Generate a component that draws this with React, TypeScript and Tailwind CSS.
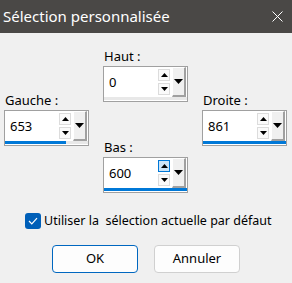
import React from "react"

const font = { fontFamily: '"Noto Sans", "Open Sans", sans-serif' }

function Tri({ down = false, size = "sm" }: { down?: boolean; size?: "sm" | "lg" }) {
  // tiny triangles used on the spinner and dropdown buttons
  if (size === "lg") {
    return (
      <svg width="9" height="5" viewBox="0 0 9 5">
        <polygon points="0,0 9,0 4.5,5" fill="#000" />
      </svg>
    )
  }
  return (
    <svg width="7" height="4" viewBox="0 0 7 4">
      <polygon points={down ? "0,0 7,0 3.5,4" : "0,4 7,4 3.5,0"} fill="#000" />
    </svg>
  )
}

function SpinField({
  label,
  value,
  fill,
  hotUp = false,
}: {
  label: string
  value: string
  fill: number
  hotUp?: boolean
}) {
  return (
    <div className="flex flex-col">
      <div className="text-[13px] leading-[16px] text-[#000] pl-[1px] mb-[2px]">{label}</div>
      <div className="relative w-[85px] h-[36px] border border-[#a0a0a0] bg-white flex">
        <div className="flex-1 flex items-center pl-[5px] pb-[3px] text-[13px] text-[#000]">{value}</div>
        <div className="flex flex-col gap-[2px] pt-[2px] mr-[2px]">
          <div
            className={
              hotUp
                ? "w-[12px] h-[12px] flex items-center justify-center border border-[#0078d7] bg-[#cce4f7]"
                : "w-[12px] h-[12px] flex items-center justify-center border border-[#dcdcdc] bg-[#fafafa]"
            }
          >
            <Tri />
          </div>
          <div className="w-[12px] h-[12px] flex items-center justify-center border border-[#dcdcdc] bg-[#fafafa]">
            <Tri down />
          </div>
        </div>
        <div className="w-[14px] h-[30px] mr-[1px] flex items-center justify-center bg-[#f0f0f0] border-r-2 border-b-2 border-[#a0a0a0] border-l border-l-white border-t border-t-white">
          <Tri size="lg" />
        </div>
        <div className="absolute left-0 right-0 bottom-[1px] h-[3px] bg-[#e8e8e8]">
          <div className="h-full bg-[#0078d7]" style={{ width: `${fill}%` }} />
        </div>
      </div>
    </div>
  )
}

export default function App() {
  return (
    <div className="w-[292px] h-[283px] bg-[#f0f0f0] flex flex-col overflow-hidden" style={font}>
      {/* title bar */}
      <div className="h-[33px] bg-[#4a4846] flex items-center justify-between pl-[3px] pr-[9px]">
        <span className="text-[15px] text-white">Sélection personnalisée</span>
        <svg width="11" height="11" viewBox="0 0 11 11">
          <path d="M0.5 0.5 L10.5 10.5 M10.5 0.5 L0.5 10.5" stroke="#fff" strokeWidth="1" />
        </svg>
      </div>

      {/* spin fields */}
      <div className="flex gap-[14px] pl-[4px] pt-[15px]">
        <div className="pt-[44px]">
          <SpinField label="Gauche :" value="653" fill={74} />
        </div>
        <div className="flex flex-col gap-[37px]">
          <SpinField label="Haut :" value="0" fill={0} />
          <SpinField label="Bas :" value="600" fill={100} hotUp />
        </div>
        <div className="pt-[44px]">
          <SpinField label="Droite :" value="861" fill={100} />
        </div>
      </div>

      {/* checkbox */}
      <div className="flex items-center gap-[3px] pl-[25px] mt-[19px] h-[18px]">
        <div className="w-[16px] h-[16px] rounded-[3px] bg-[#005fb8] flex items-center justify-center">
          <svg width="10" height="8" viewBox="0 0 10 8">
            <path d="M1 4 L3.8 6.8 L9 1.2" stroke="#fff" strokeWidth="1.2" fill="none" />
          </svg>
        </div>
        <span className="text-[12.5px] text-[#000] whitespace-pre">Utiliser la  sélection actuelle par défaut</span>
      </div>

      {/* buttons */}
      <div className="flex gap-[16px] pl-[52px] mt-[15px]">
        <button className="w-[86px] h-[28px] rounded-[4px] border border-[#0067c0] bg-[#fdfdfd] text-[13px] text-[#000]">
          OK
        </button>
        <button className="w-[86px] h-[28px] rounded-[4px] border border-[#d0d0d0] bg-[#fdfdfd] text-[13px] text-[#000]">
          Annuler
        </button>
      </div>
    </div>
  )
}
